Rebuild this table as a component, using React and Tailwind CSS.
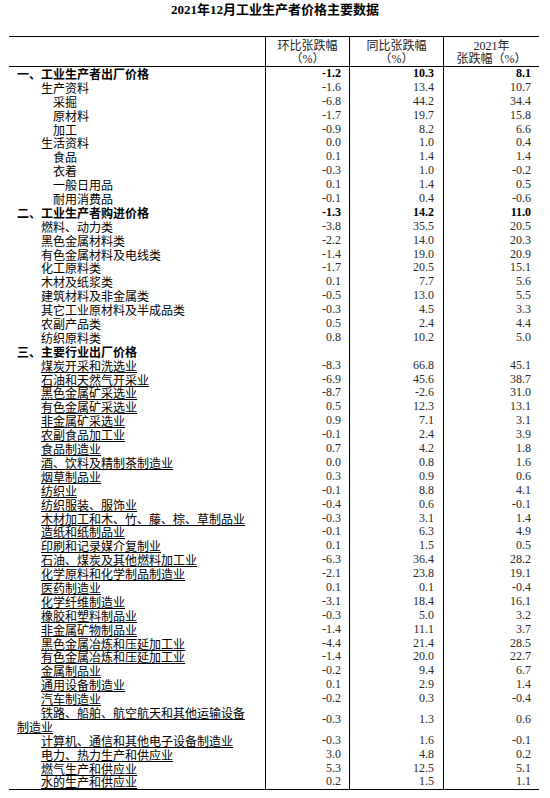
import React from "react";

const cjk = "font-['Noto_Sans_CJK_SC',sans-serif]";
const serif = "font-['Liberation_Serif','Noto_Sans_CJK_SC',serif]";

// level: 0 = section, 2 = second level, 3 = third level
const rows = [
    {name: "一、工业生产者出厂价格", level: 0, v: ["-1.2", "10.3", "8.1"]},
    {name: "生产资料", level: 2, v: ["-1.6", "13.4", "10.7"]},
    {name: "采掘", level: 3, v: ["-6.8", "44.2", "34.4"]},
    {name: "原材料", level: 3, v: ["-1.7", "19.7", "15.8"]},
    {name: "加工", level: 3, v: ["-0.9", "8.2", "6.6"]},
    {name: "生活资料", level: 2, v: ["0.0", "1.0", "0.4"]},
    {name: "食品", level: 3, v: ["0.1", "1.4", "1.4"]},
    {name: "衣着", level: 3, v: ["-0.3", "1.0", "-0.2"]},
    {name: "一般日用品", level: 3, v: ["0.1", "1.4", "0.5"]},
    {name: "耐用消费品", level: 3, v: ["-0.1", "0.4", "-0.6"]},
    {name: "二、工业生产者购进价格", level: 0, v: ["-1.3", "14.2", "11.0"]},
    {name: "燃料、动力类", level: 2, v: ["-3.8", "35.5", "20.5"]},
    {name: "黑色金属材料类", level: 2, v: ["-2.2", "14.0", "20.3"]},
    {name: "有色金属材料及电线类", level: 2, v: ["-1.4", "19.0", "20.9"]},
    {name: "化工原料类", level: 2, v: ["-1.7", "20.5", "15.1"]},
    {name: "木材及纸浆类", level: 2, v: ["0.1", "7.7", "5.6"]},
    {name: "建筑材料及非金属类", level: 2, v: ["-0.5", "13.0", "5.5"]},
    {name: "其它工业原材料及半成品类", level: 2, v: ["-0.3", "4.5", "3.3"]},
    {name: "农副产品类", level: 2, v: ["0.5", "2.4", "4.4"]},
    {name: "纺织原料类", level: 2, v: ["0.8", "10.2", "5.0"]},
    {name: "三、主要行业出厂价格", level: 0, v: ["", "", ""]},
    {name: "煤炭开采和洗选业", level: 2, link: true, v: ["-8.3", "66.8", "45.1"]},
    {name: "石油和天然气开采业", level: 2, link: true, v: ["-6.9", "45.6", "38.7"]},
    {name: "黑色金属矿采选业", level: 2, link: true, v: ["-8.7", "-2.6", "31.0"]},
    {name: "有色金属矿采选业", level: 2, link: true, v: ["0.5", "12.3", "13.1"]},
    {name: "非金属矿采选业", level: 2, link: true, v: ["0.9", "7.1", "3.1"]},
    {name: "农副食品加工业", level: 2, link: true, v: ["-0.1", "2.4", "3.9"]},
    {name: "食品制造业", level: 2, link: true, v: ["0.7", "4.2", "1.8"]},
    {name: "酒、饮料及精制茶制造业", level: 2, link: true, v: ["0.0", "0.8", "1.6"]},
    {name: "烟草制品业", level: 2, link: true, v: ["0.3", "0.9", "0.6"]},
    {name: "纺织业", level: 2, link: true, v: ["-0.1", "8.8", "4.1"]},
    {name: "纺织服装、服饰业", level: 2, link: true, v: ["-0.4", "0.6", "-0.1"]},
    {name: "木材加工和木、竹、藤、棕、草制品业", level: 2, link: true, v: ["-0.3", "3.1", "1.4"]},
    {name: "造纸和纸制品业", level: 2, link: true, v: ["-0.1", "6.3", "4.9"]},
    {name: "印刷和记录媒介复制业", level: 2, link: true, v: ["0.1", "1.5", "0.5"]},
    {name: "石油、煤炭及其他燃料加工业", level: 2, link: true, v: ["-6.3", "36.4", "28.2"]},
    {name: "化学原料和化学制品制造业", level: 2, link: true, v: ["-2.1", "23.8", "19.1"]},
    {name: "医药制造业", level: 2, link: true, v: ["0.1", "0.1", "-0.4"]},
    {name: "化学纤维制造业", level: 2, link: true, v: ["-3.1", "18.4", "16.1"]},
    {name: "橡胶和塑料制品业", level: 2, link: true, v: ["-0.3", "5.0", "3.2"]},
    {name: "非金属矿物制品业", level: 2, link: true, v: ["-1.4", "11.1", "3.7"]},
    {name: "黑色金属冶炼和压延加工业", level: 2, link: true, v: ["-4.4", "21.4", "28.5"]},
    {name: "有色金属冶炼和压延加工业", level: 2, link: true, v: ["-1.4", "20.0", "22.7"]},
    {name: "金属制品业", level: 2, link: true, v: ["-0.2", "9.4", "6.7"]},
    {name: "通用设备制造业", level: 2, link: true, v: ["0.1", "2.9", "1.4"]},
    {name: "汽车制造业", level: 2, link: true, v: ["-0.2", "0.3", "-0.4"]},
    {name: "铁路、船舶、航空航天和其他运输设备", wrap: "制造业", level: 2, link: true, v: ["-0.3", "1.3", "0.6"]},
    {name: "计算机、通信和其他电子设备制造业", level: 2, link: true, v: ["-0.3", "1.6", "-0.1"]},
    {name: "电力、热力生产和供应业", level: 2, link: true, v: ["3.0", "4.8", "0.2"]},
    {name: "燃气生产和供应业", level: 2, link: true, v: ["5.3", "12.5", "5.1"]},
    {name: "水的生产和供应业", level: 2, link: true, v: ["0.2", "1.5", "1.1"]},
];

const grid = "grid grid-cols-[256px_84px_94px_96px]";
const indent = {0: "indent-0", 2: "indent-[24px]", 3: "indent-[36px]"};

function DataRow({row}) {
    const bold = row.level === 0;
    const tall = !!row.wrap;
    const h = tall ? "h-[27.8px]" : "h-[13.9px]";
    const text = (
        <span className={row.link ? "underline underline-offset-[1px] decoration-1" : ""}>
            {row.name}
            {row.wrap && <br />}
            {row.wrap}
        </span>
    );
    return (
        <div className={`${grid} ${h}`}>
            <div className={`${cjk} ${indent[row.level]} pl-[8px] text-[12px] leading-[13.9px] text-black whitespace-nowrap ${bold ? "font-bold" : ""}`}>
                {text}
            </div>
            {row.v.map((n, i) => (
                <div
                    key={i}
                    className={`border-l border-black flex items-center justify-end ${serif} text-[12px] leading-[13.9px] text-[#2a2a2a] ${i === 1 ? "pr-[9px]" : "pr-[8px]"} ${bold ? "font-bold text-black" : ""}`}
                >
                    {n}
                </div>
            ))}
        </div>
    );
}

export default function App() {
    return (
        <div className="w-[550px] h-[798px] bg-white overflow-hidden">
            <div className={`h-[36px] pt-[2px] text-center ${serif} font-bold text-[13px] leading-[16px] text-black`}>
                2021年12月工业生产者价格主要数据
            </div>
            <div className="ml-[9px] w-[530px] border-t border-b border-black">
                <div className={`${grid} h-[30px] border-b border-black`}>
                    <div></div>
                    {[["环比张跌幅", "（%）"], ["同比张跌幅", "（%）"], ["2021年", "张跌幅（%）"]].map((h, i) => (
                        <div key={i} className={`border-l border-black pt-[3px] text-center ${serif} text-[12px] leading-[13px] text-[#222]`}>
                            <div>{h[0]}</div>
                            <div>{h[1]}</div>
                        </div>
                    ))}
                </div>
                {rows.map((r, i) => (
                    <DataRow key={i} row={r} />
                ))}
            </div>
        </div>
    );
}
